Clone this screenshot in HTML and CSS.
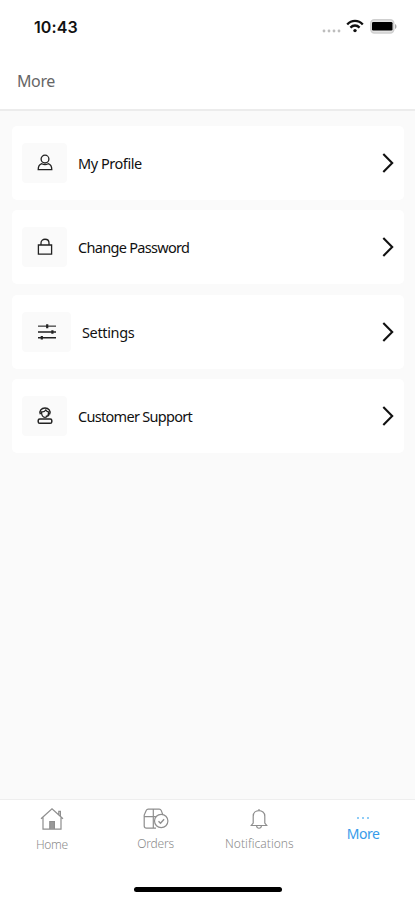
FILE: index.html
```html
<!DOCTYPE html>
<html lang="en">
<head>
  <title>More</title>
  <meta charset="utf-8">
  <meta name="viewport" content="width=device-width, initial-scale=1">
  <link rel="stylesheet" href="styles.css">
</head>
<body>
<div class="statusbar">
  <span class="time">10:43</span>
  <div class="indicators">
    <svg class="signal" width="19" height="4" viewBox="0 0 19 4" fill="#bdbdbd">
      <circle cx="2" cy="2" r="1.4"/><circle cx="7" cy="2" r="1.4"/><circle cx="12" cy="2" r="1.4"/><circle cx="17" cy="2" r="1.4"/>
    </svg>
    <svg class="wifi" width="18" height="14" viewBox="0 0 18 14" fill="none" stroke="#111" stroke-width="2.3">
      <path d="M1.2 5.5C5.6.7 12.4.7 16.8 5.5"/>
      <path d="M4.4 8.6c2.8-2.8 6.4-2.8 9.2 0"/>
      <circle cx="9" cy="11.6" r="1.7" fill="#111" stroke="none"/>
    </svg>
    <svg class="battery" width="27" height="15" viewBox="0 0 27 15">
      <rect x=".8" y=".8" width="23" height="13.2" rx="3.5" fill="#e4e4e4" stroke="#cfcfcf" stroke-width="1.4"/>
      <rect x="2" y="3" width="20.5" height="8.5" rx="1.3" fill="#000"/>
      <path d="M25 5v5c2-.7 2-4.3 0-5z" fill="#aaa"/>
    </svg>
  </div>
</div>
<header>
  <h1>More</h1>
</header>
<main>
  <a class="card">
    <span class="icon">
      <svg width="16" height="18" viewBox="0 0 16 18">
        <circle cx="8" cy="5.1" r="3.9"/>
        <path d="M4.8 9.7C2.4 10.5 1.2 12 1.2 15.7h13.6c0-3.7-1.2-5.2-3.6-6-1.9 1.2-4.5 1.2-6.4 0z"/>
      </svg>
    </span>
    <span class="label profile">My Profile</span>
    <svg class="chevron" width="12" height="20" viewBox="0 0 12 20"><path d="M1.3 1l8.9 9-8.9 9"/></svg>
  </a>
  <a class="card">
    <span class="icon">
      <svg width="16" height="18" viewBox="0 0 16 18">
        <path d="M1.4 7h13.2v9.2H1.4zM4 7V5c0-5 8-5 8 0v2"/>
      </svg>
    </span>
    <span class="label password">Change Password</span>
    <svg class="chevron" width="12" height="20" viewBox="0 0 12 20"><path d="M1.3 1l8.9 9-8.9 9"/></svg>
  </a>
  <a class="card">
    <span class="icon wide">
      <svg width="20" height="18" viewBox="0 0 20 18">
        <path d="M1 3.2h18" stroke="#666" stroke-width="1.6"/>
        <path d="M1 9h18M1 14.7h18" stroke-width="1.5"/>
        <path d="M10.2 1.2v4M15.4 7.3v3.4M4.8 13v3.4" stroke-width="2.2"/>
      </svg>
    </span>
    <span class="label settings">Settings</span>
    <svg class="chevron" width="12" height="20" viewBox="0 0 12 20"><path d="M1.3 1l8.9 9-8.9 9"/></svg>
  </a>
  <a class="card">
    <span class="icon">
      <svg width="16" height="18" viewBox="0 0 16 18">
        <path d="M3.4 7.2C1.8 3.8 4.5 1.1 8 1.1s6.2 2.7 4.6 6.1" stroke-width="1.5"/>
        <path d="M4.6 4.9c1.6.2 3.3-.5 4.2-1.9.5 1.1 1.4 1.8 2.6 1.9.5 2.9-1.1 5.5-3.4 5.5S4.3 7.9 4.6 4.9zM12.4 7.2c-.5 1.8-1.9 2.2-3.6 2"/>
        <rect x="1.2" y="12" width="13.6" height="4.3" rx="1.6" stroke-width="1.5"/>
      </svg>
    </span>
    <span class="label support">Customer Support</span>
    <svg class="chevron" width="12" height="20" viewBox="0 0 12 20"><path d="M1.3 1l8.9 9-8.9 9"/></svg>
  </a>
</main>
<nav>
  <a class="tab home">
    <svg width="26" height="24" viewBox="0 0 26 24">
      <path d="M2 11.8L13 1.8l11 10M4 10.5v11.6h18V10.5M19.8 7.7V4.4h1.6v4.8"/>
      <path d="M10.8 22v-7.5h4.6V22" fill="#999"/>
    </svg>
    <span>Home</span>
  </a>
  <a class="tab orders">
    <svg width="26" height="22" viewBox="0 0 26 22">
      <path d="M13 20.2H3.5A2.3 2.3 0 0 1 1.2 18V7l2-4.6Q3.8 1.2 5.2 1.2h11q1.5 0 2 1.2l1.5 4M1.2 8.7h13M10.3 1.2v19"/>
      <circle cx="18.2" cy="13" r="6.7" fill="#fff"/>
      <path d="M15.5 13.3l2 2 3.6-4" stroke-width="1.4"/>
    </svg>
    <span>Orders</span>
  </a>
  <a class="tab notifications">
    <svg width="18" height="22" viewBox="0 0 18 22">
      <path d="M3.2 15V8.2c0-7.4 11.6-7.4 11.6 0V15l1.9 2.5H1.3zM9 2.5V1M6.6 18c.4 3 4.4 3 4.8 0"/>
    </svg>
    <span>Notifications</span>
  </a>
  <a class="tab more active">
    <svg width="14" height="4" viewBox="0 0 14 4">
      <circle cx="2" cy="2" r="1"/><circle cx="7" cy="2" r="1"/><circle cx="12" cy="2" r="1"/>
    </svg>
    <span>More</span>
  </a>
</nav>
<div class="home-indicator"></div>
</body>
</html>
```
FILE: styles.css
```css
* {
    box-sizing: border-box;
}

body {
    display: flex;
    flex-direction: column;
    height: 900px;
    margin: 0;
    background: #fff;
    color: #111;
    font-family: "Noto Sans", "Open Sans", sans-serif;
    overflow: hidden;
}

svg {
    display: block;
    flex: none;
}

.statusbar {
    display: flex;
    justify-content: space-between;
    height: 54px;
    padding: 17px 18px 0 34px;
}

.time {
    font: 600 16px/20px Inter, sans-serif;
    letter-spacing: 0.1px;
}

.indicators {
    display: flex;
    align-items: flex-start;
}

.signal {
    margin: 12px 5px 0 0;
}

.wifi {
    margin: 2px 6px 0 0;
}

.battery {
    margin-top: 2px;
}

header {
    height: 57px;
    padding: 16px 17px 0;
    border-bottom: 2px solid #ececec;
}

h1 {
    margin: 0;
    color: #666;
    font-size: 16px;
    font-weight: 400;
    line-height: 22px;
    letter-spacing: -0.4px;
}

main {
    display: flex;
    flex: 1;
    flex-direction: column;
    gap: 10.3px;
    padding: 15px 11px 0 12px;
    background: #fafafa;
}

.card {
    display: flex;
    align-items: center;
    height: 74px;
    padding: 0 10px;
    border-radius: 5px;
    background: #fff;
}

.icon {
    display: flex;
    align-items: center;
    justify-content: center;
    width: 45px;
    height: 40px;
    border-radius: 4px;
    background: #fafafa;
}

.icon.wide {
    width: 49px;
}

.icon svg {
    fill: none;
    stroke: #222;
    stroke-width: 1.3;
}

.label {
    flex: 1;
    margin-left: 11px;
    font-size: 14.5px;
    line-height: 22px;
    white-space: nowrap;
}

.profile {
    letter-spacing: -0.45px;
}

.password {
    letter-spacing: -0.7px;
}

.settings {
    letter-spacing: -0.35px;
}

.support {
    letter-spacing: -0.7px;
}

.chevron {
    fill: none;
    stroke: #111;
    stroke-width: 2.1;
}

nav {
    display: grid;
    grid-template-columns: repeat(4, 1fr);
    height: 77px;
    border-top: 1px solid #eee;
    color: #8c8c8c;
}

.tab {
    display: flex;
    flex-direction: column;
    align-items: center;
    font-size: 12px;
    font-weight: 300;
    line-height: 16px;
}

.tab svg {
    fill: none;
    stroke: #8e8e8e;
    stroke-width: 1.2;
}

.home svg {
    margin: 7px 0 6px;
}

.home span {
    letter-spacing: -0.3px;
}

.orders svg {
    margin: 8px 0 6px;
}

.orders span {
    letter-spacing: -0.2px;
}

.notifications svg {
    margin: 8px 0 6px;
}

.notifications span {
    letter-spacing: 0.05px;
}

.tab.more svg {
    margin: 16px 0 5px;
    fill: #6bbcf5;
    stroke: none;
}

.active {
    color: #369bea;
    font-size: 14px;
    font-weight: 400;
    line-height: 18px;
    letter-spacing: -0.4px;
}

.home-indicator {
    width: 148px;
    height: 5px;
    margin: 11px auto 8px 134px;
    border-radius: 3px;
    background: #000;
}
```
